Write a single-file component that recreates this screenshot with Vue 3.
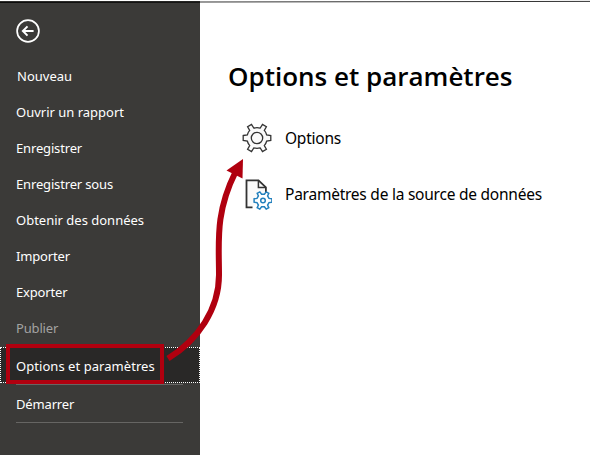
<script setup>
const items = [
  { label: 'Nouveau', cls: 'first' },
  { label: 'Ouvrir un rapport', cls: '' },
  { label: 'Enregistrer', cls: 'tight' },
  { label: 'Enregistrer sous', cls: 'tight' },
  { label: 'Obtenir des données', cls: '' },
  { label: 'Importer', cls: 'tight' },
  { label: 'Exporter', cls: 'tight' },
  { label: 'Publier', cls: 'disabled tight' },
  { label: 'Options et paramètres', cls: 'selected' },
  { label: 'Démarrer', cls: 'start tight' },
]
</script>

<template>
  <div class="screen">
    <nav class="sidebar">
      <button class="back" aria-label="Retour">
        <svg width="24" height="24" viewBox="0 0 24 24" fill="none" stroke="#fff">
          <circle cx="12" cy="12" r="10.9" stroke-width="1.7" />
          <path d="M17.6 12H7.2M11.5 7.4L6.9 12l4.6 4.6" stroke-width="2" />
        </svg>
      </button>
      <ul class="menu">
        <li v-for="item in items" :key="item.label" :class="['item', item.cls]">
          <span>{{ item.label }}</span>
        </li>
      </ul>
    </nav>
    <main class="content">
      <h1>Options et paramètres</h1>
      <div class="option">
        <svg class="gear" width="30" height="30" viewBox="-15 -15 30 30" fill="#fafafa" stroke="#333" stroke-width="1.3">
          <path d="M-13.8 -2.5L-9.7 -3Q-8.9 -5.9 -7.3 -7.6L-9.4 -11.2L-5.5 -13.5L-3.2 -9.9Q0 -10.7 3.2 -9.9L5.5 -13.5L9.4 -11.2L7.3 -7.6Q8.9 -5.9 9.7 -3L13.8 -2.5V2.5L9.7 3Q8.9 5.9 7.3 7.6L9.4 11.2L5.5 13.5L3.2 9.9Q0 10.7 -3.2 9.9L-5.5 13.5L-9.4 11.2L-7.3 7.6Q-8.9 5.9 -9.7 3L-13.8 2.5Z" />
          <circle r="5.7" />
        </svg>
        <span>Options</span>
      </div>
      <div class="option">
        <svg class="file" width="30" height="32" viewBox="0 0 30 32" fill="none">
          <path d="M10.500 29.300H4.500V2.300h12l7.400 7.100v5.200" fill="#fafafa" stroke="#333" stroke-width="1.8" />
          <path d="M16.400 2.400v7.100h7.400" stroke="#333" stroke-width="1.500" />
          <g transform="translate(21 22.5)" fill="#fff" stroke="#2380bd" stroke-width="1.500">
            <path d="M-8.9 -1.7L-6 -2.1L-4.6 -4.5L-5.8 -7.1L-3.2 -8.6L-1.4 -6.2H1.4L3.2 -8.6L5.8 -7.1L4.6 -4.5L6 -2.1L8.9 -1.7V1.7L6 2.1L4.6 4.5L5.8 7.1L3.2 8.6L1.4 6.2H-1.4L-3.2 8.6L-5.8 7.1L-4.6 4.5L-6 2.1L-8.9 1.7Z" />
            <circle r="2.3" />
          </g>
        </svg>
        <span>Paramètres de la source de données</span>
      </div>
    </main>
    <svg class="annotation" width="590" height="455" viewBox="0 0 590 455" fill="none">
      <path d="M0 2.3L200 2.1" stroke="#000" stroke-width="1" />
      <path d="M200 2L590 1.4" stroke="#333" stroke-width="1" />
      <rect x="8" y="346" width="154" height="36" stroke="#b0000f" stroke-width="4" />
      <path d="M168 358.5C198 340 219 309 219 275C219 242 215 213 235.5 172" stroke="#b0000f" stroke-width="6" />
      <path d="M243 159L226.5 170.5L242.5 178.5Z" fill="#b0000f" />
    </svg>
  </div>
</template>

<style>
body { margin: 0; }
</style>
<style scoped>
.screen {
  position: relative;
  display: flex;
  width: 590px;
  height: 455px;
  overflow: hidden;
  background: #fff;
  font-family: "Noto Sans", "Open Sans", sans-serif;
}
.sidebar {
  box-sizing: border-box;
  width: 200px;
  padding-top: 18px;
  border-top: 1px solid #fff;
  background: #3b3a38;
  color: #fff;
}
.back {
  display: block;
  margin: 0 0 15px 16px;
  padding: 0;
  border: 0;
  background: none;
  height: 24px;
}
.back svg { display: block; }
.menu { margin: 0; padding: 0; list-style: none; }
.item {
  display: flex;
  align-items: center;
  box-sizing: border-box;
  height: 36px;
  padding-left: 16px;
  font-size: 13px;
  white-space: nowrap;
}
.tight { letter-spacing: -0.16px; }
.first { padding-left: 17px; }
.disabled { color: #a3a3a2; }
.selected {
  height: 36px;
  margin-top: 1px;
  padding: 2px 0 0 15px;
  border: 1px dotted #fff;
  background: #292827;
  letter-spacing: 0.05px;
}
.start {
  height: 39px;
  margin: 1px 17px 0 16px;
  padding-left: 0;
  border-top: 1px solid #666563;
  border-bottom: 1px solid #666563;
}
.content { flex: 1; padding: 57px 0 0 28px; color: #000; }
h1 {
  margin: 0;
  font-family: "Open Sans", "Noto Sans", sans-serif;
  font-size: 26px;
  line-height: 39px;
  font-weight: 600;
  white-space: nowrap;
}
.option {
  display: flex;
  align-items: center;
  gap: 13px;
  height: 56px;
  padding-left: 14px;
  font-size: 15.5px;
  letter-spacing: -0.24px;
  white-space: nowrap;
}
.content h1 + .option { margin-top: 14px; }
.annotation { position: absolute; top: 0; left: 0; }
</style>
